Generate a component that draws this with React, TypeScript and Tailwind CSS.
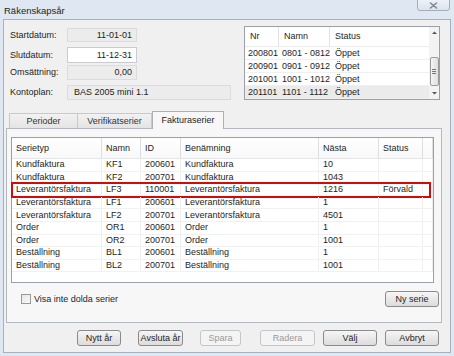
import React from 'react';

type Row = [string, string, string, string, string, string];

const serier: Row[] = [
  ['Kundfaktura', 'KF1', '200601', 'Kundfaktura', '10', ''],
  ['Kundfaktura', 'KF2', '200701', 'Kundfaktura', '1043', ''],
  ['Leverantörsfaktura', 'LF3', '110001', 'Leverantörsfaktura', '1216', 'Förvald'],
  ['Leverantörsfaktura', 'LF1', '200601', 'Leverantörsfaktura', '1', ''],
  ['Leverantörsfaktura', 'LF2', '200701', 'Leverantörsfaktura', '4501', ''],
  ['Order', 'OR1', '200601', 'Order', '1', ''],
  ['Order', 'OR2', '200701', 'Order', '1001', ''],
  ['Beställning', 'BL1', '200601', 'Beställning', '1', ''],
  ['Beställning', 'BL2', '200701', 'Beställning', '1001', ''],
];

const perioder = [
  ['200801', '0801 - 0812', 'Öppet'],
  ['200901', '0901 - 0912', 'Öppet'],
  ['201001', '1001 - 1012', 'Öppet'],
  ['201101', '1101 - 1112', 'Öppet'],
];

const colW = ['w-[90px]', 'w-[39px]', 'w-[40px]', 'w-[138px]', 'w-[60px]', 'w-[44px]'];

function Field({ label, value, white, wide, left, h, mt }: {
  label: string;
  value: string;
  white?: boolean;
  wide?: boolean;
  left?: boolean;
  h: string;
  mt: string;
}) {
  return (
    <div className={`flex items-center ${mt}`}>
      <span className="w-[57px] text-[#1e1e1e]">{label}</span>
      <div
        className={`${h} ${wide ? 'w-[164px]' : 'w-[70px]'} flex items-center border ${
          white ? 'bg-white border-[#c8ccd2]' : 'bg-[#ececec] border-[#dcdcdc]'
        } ${left ? 'justify-start pl-[6px]' : 'justify-end pr-[4px]'}`}
      >
        {value}
      </div>
    </div>
  );
}

function Btn({ label, w, ml, disabled }: { label: string; w: string; ml: string; disabled?: boolean }) {
  return (
    <div
      className={`${w} ${ml} h-[16px] flex items-center justify-center rounded-[3px] border ${
        disabled
          ? 'border-[#c4c7ca] bg-[#f4f4f4] text-[#9a9a9a]'
          : 'border-[#8a8a8a] bg-gradient-to-b from-[#f6f6f6] to-[#dcdcdc] text-[#1e1e1e]'
      }`}
    >
      {label}
    </div>
  );
}

function PeriodTable() {
  return (
    <div className="ml-[13px] w-[196px] h-[74px] border border-[#9aa0a8] bg-white flex">
      <div className="w-[184px] flex flex-col">
        <div className="h-[20px] flex items-center border-b border-[#ececec]">
          <div className="w-[34px] h-full flex items-center pl-[5px] border-r border-[#e2e2e2]">Nr</div>
          <div className="w-[51px] h-full flex items-center pl-[5px] border-r border-[#e2e2e2]">Namn</div>
          <div className="flex-1 h-full flex items-center pl-[5px]">Status</div>
        </div>
        {perioder.map((p, i) => (
          <div
            key={p[0]}
            className={`h-[13px] flex items-center whitespace-nowrap border-b border-[#f0f0f0] ${i === 3 ? 'bg-[#ebebeb]' : ''}`}
          >
            <div className="w-[34px] shrink-0 pl-[3px]">{p[0]}</div>
            <div className="w-[51px] shrink-0 pl-[3px]">{p[1]}</div>
            <div className="flex-1 pl-[5px]">{p[2]}</div>
          </div>
        ))}
      </div>
      <div className="w-[10px] bg-[#f3f3f3] flex flex-col items-center">
        <svg width="7" height="12" viewBox="0 0 7 12" className="mt-[1px]">
          <path d="M1 6 L3.5 3.5 L6 6 Z" fill="#555" />
        </svg>
        <div className="mt-[17px] w-[9px] h-[29px] rounded-[2px] border border-[#9b9b9b] bg-gradient-to-r from-[#f4f4f4] to-[#dedede] flex flex-col items-center justify-center gap-[1px]">
          <div className="w-[4px] h-px bg-[#777]" />
          <div className="w-[4px] h-px bg-[#777]" />
          <div className="w-[4px] h-px bg-[#777]" />
        </div>
        <svg width="7" height="10" viewBox="0 0 7 10" className="mt-auto mb-[1px]">
          <path d="M1 4 L3.5 6.5 L6 4 Z" fill="#555" />
        </svg>
      </div>
    </div>
  );
}

function SerieTable() {
  return (
    <div className="w-[423px] h-[146px] border border-[#9aa0a8] bg-white">
      <div className="h-[21px] flex border-b border-[#e6e6e6] bg-gradient-to-b from-white to-[#f7f8f9]">
        {['Serietyp', 'Namn', 'ID', 'Benämning', 'Nästa', 'Status'].map((h, i) => (
          <div key={h} className={`${colW[i]} flex items-center pl-[4px] border-r border-[#dedede]`}>
            {h}
          </div>
        ))}
        <div className="w-[10px] border-r border-[#dedede]" />
      </div>
      {serier.map((r, i) => (
        <div key={i} className="relative h-[12.6px] flex items-center whitespace-nowrap border-b border-[#f1f1f1]">
          {r.map((c, j) => (
            <div key={j} className={`${colW[j]} h-full flex items-center pl-[4px] border-r border-[#efefef]`}>
              {c}
            </div>
          ))}
          <div className="w-[10px] h-full border-r border-[#efefef]" />
          {i === 2 && (
            <div className="absolute -left-[1px] right-[2px] -top-[2px] -bottom-[2px] border-2 border-[#d40a0a]" />
          )}
        </div>
      ))}
    </div>
  );
}

export default function App() {
  return (
    <div className="w-[454px] h-[356px] bg-[#dfe8f2] font-['Liberation_Sans',Arial,sans-serif] text-[9px] leading-none text-[#1e1e1e] overflow-hidden">
      <div className="h-[19px] flex justify-between">
        <span className="pl-[4px] pt-[6px] text-[9.5px] text-[#1e1e1e]">Räkenskapsår</span>
        <div className="mr-[4px] w-[33px] h-[12px] -mt-px rounded-b-[3px] border border-[#a4aebb] bg-gradient-to-b from-[#edf2f8] to-[#dbe3ed] flex items-center justify-center">
          <svg width="9" height="7" viewBox="0 0 9 7">
            <path d="M1.5 1 L7.5 6 M7.5 1 L1.5 6" stroke="#7d8896" strokeWidth="1.6" strokeLinecap="round" />
          </svg>
        </div>
      </div>

      <div className="mx-[3px] h-[334px] border border-[#a7b1bd] bg-[#f0f0f0] flex flex-col">
        <div className="pt-[6px] flex items-start">
          <div className="ml-[6px] mt-[2px] flex flex-col">
            <Field label="Startdatum:" value="11-01-01" h="h-[14px]" mt="" />
            <Field label="Slutdatum:" value="11-12-31" white h="h-[16px]" mt="mt-[5px]" />
            <Field label="Omsättning:" value="0,00" h="h-[15px]" mt="mt-[2px]" />
            <Field label="Kontoplan:" value="BAS 2005 mini 1.1" wide left h="h-[15px]" mt="mt-[5px]" />
          </div>
          <PeriodTable />
        </div>

        <div className="mt-[11px] ml-[5px] h-[17px] flex items-end relative z-10">
          <div className="w-[69px] h-[15px] flex items-center justify-center border border-b-0 border-[#c6c9cd] bg-gradient-to-b from-[#f2f2f2] to-[#e4e4e4] text-[#333]">
            Perioder
          </div>
          <div className="w-[74px] h-[15px] flex items-center justify-center border border-b-0 border-l-0 border-[#c6c9cd] bg-gradient-to-b from-[#f2f2f2] to-[#e4e4e4] text-[#333]">
            Verifikatserier
          </div>
          <div className="w-[72px] h-[18px] -mb-px flex items-center justify-center border border-b-0 border-[#a9b0b8] bg-[#f7f7f7] text-[#1e1e1e]">
            Fakturaserier
          </div>
        </div>

        <div className="ml-[2px] w-[436px] h-[195px] border border-[#b4b9bf] bg-[#f7f7f7] pl-[4px] pt-[8px] flex flex-col">
          <SerieTable />
          <div className="mt-[8px] flex items-center">
            <div className="ml-[10px] w-[10px] h-[10px] border border-[#9a9a9a] bg-gradient-to-br from-[#e6e6e6] to-[#f8f8f8]" />
            <span className="ml-[3px]">Visa inte dolda serier</span>
            <div className="ml-auto mr-[2px] w-[54px] h-[16px] flex items-center justify-center rounded-[3px] border border-[#8a8a8a] bg-gradient-to-b from-[#f6f6f6] to-[#dcdcdc]">
              Ny serie
            </div>
          </div>
        </div>

        <div className="mt-[7px] flex">
          <Btn label="Nytt år" w="w-[44px]" ml="ml-[73px]" />
          <Btn label="Avsluta år" w="w-[45px]" ml="ml-[17px]" />
          <Btn label="Spara" w="w-[41px]" ml="ml-[17px]" disabled />
          <Btn label="Radera" w="w-[55px]" ml="ml-[19px]" disabled />
          <Btn label="Välj" w="w-[54px]" ml="ml-[8px]" />
          <Btn label="Avbryt" w="w-[54px]" ml="ml-[8px]" />
        </div>
      </div>
    </div>
  );
}
